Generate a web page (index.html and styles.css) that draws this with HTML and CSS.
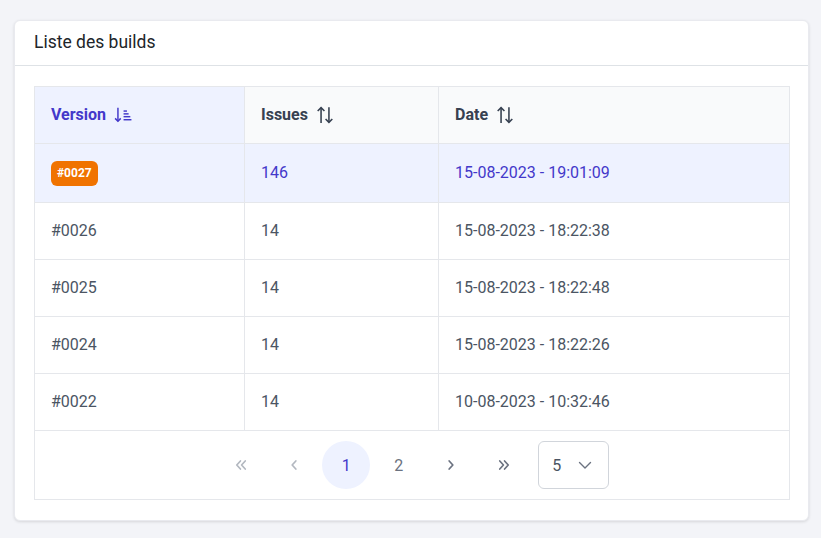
FILE: index.html
```html
<!DOCTYPE html>
<html lang="fr">
<head>
<meta charset="utf-8">
<title>Liste des builds</title>
<link rel="stylesheet" href="styles.css">
</head>
<body>
<div class="page">
  <section class="card">
    <header class="card-header">Liste des builds</header>
    <div class="card-body">
      <div class="datatable">
        <table>
          <colgroup>
            <col class="c1"><col class="c2"><col class="c3">
          </colgroup>
          <thead>
            <tr>
              <th class="sorted"><span class="th-inner">Version
                <svg class="sort-icon" width="18" height="18" viewBox="0 0 16 16" fill="none" stroke="currentColor" stroke-width="1.3">
                  <path d="M3.5 1.5v12"/><path d="M1 11l2.5 2.6L6 11"/>
                  <path d="M8.5 4.5h3"/><path d="M8.5 7h4.5"/><path d="M8.5 9.5h6"/><path d="M8.5 12.2h7"/>
                </svg></span></th>
              <th><span class="th-inner">Issues
                <svg class="sort-icon" width="18" height="18" viewBox="0 0 16 16" fill="none" stroke="currentColor" stroke-width="1.4">
                  <path d="M4.5 15V1.5"/><path d="M1.5 4.5l3-3 3 3"/>
                  <path d="M11.5 1v13.5"/><path d="M8.5 11.5l3 3 3-3"/>
                </svg></span></th>
              <th><span class="th-inner">Date
                <svg class="sort-icon" width="18" height="18" viewBox="0 0 16 16" fill="none" stroke="currentColor" stroke-width="1.4">
                  <path d="M4.5 15V1.5"/><path d="M1.5 4.5l3-3 3 3"/>
                  <path d="M11.5 1v13.5"/><path d="M8.5 11.5l3 3 3-3"/>
                </svg></span></th>
            </tr>
          </thead>
          <tbody>
            <tr class="highlight">
              <td><span class="badge">#0027</span></td>
              <td>146</td>
              <td>15-08-2023 - 19:01:09</td>
            </tr>
            <tr><td>#0026</td><td>14</td><td>15-08-2023 - 18:22:38</td></tr>
            <tr><td>#0025</td><td>14</td><td>15-08-2023 - 18:22:48</td></tr>
            <tr><td>#0024</td><td>14</td><td>15-08-2023 - 18:22:26</td></tr>
            <tr><td>#0022</td><td>14</td><td>10-08-2023 - 10:32:46</td></tr>
          </tbody>
        </table>
        <nav class="paginator">
          <button class="pg-btn disabled" aria-label="Première page">
            <svg width="16" height="16" viewBox="0 0 14 14" fill="none" stroke="currentColor" stroke-width="1.5" stroke-linecap="round" stroke-linejoin="round"><path d="M6.5 3.5L3.3 7l3.2 3.5"/><path d="M10.7 3.5L7.5 7l3.2 3.5"/></svg>
          </button>
          <button class="pg-btn disabled" aria-label="Page précédente">
            <svg width="16" height="16" viewBox="0 0 14 14" fill="none" stroke="currentColor" stroke-width="1.5" stroke-linecap="round" stroke-linejoin="round"><path d="M8.6 3.5L5.4 7l3.2 3.5"/></svg>
          </button>
          <button class="pg-btn page active">1</button>
          <button class="pg-btn page">2</button>
          <button class="pg-btn" aria-label="Page suivante">
            <svg width="16" height="16" viewBox="0 0 14 14" fill="none" stroke="currentColor" stroke-width="1.5" stroke-linecap="round" stroke-linejoin="round"><path d="M5.4 3.5L8.6 7l-3.2 3.5"/></svg>
          </button>
          <button class="pg-btn" aria-label="Dernière page">
            <svg width="16" height="16" viewBox="0 0 14 14" fill="none" stroke="currentColor" stroke-width="1.5" stroke-linecap="round" stroke-linejoin="round"><path d="M3.3 3.5L6.5 7l-3.2 3.5"/><path d="M7.5 3.5L10.7 7l-3.2 3.5"/></svg>
          </button>
          <div class="dropdown">
            <span class="dd-label">5</span>
            <svg class="dd-chevron" width="16" height="16" viewBox="0 0 16 16" fill="none" stroke="currentColor" stroke-width="1.4" stroke-linecap="round" stroke-linejoin="round"><path d="M2.5 5.5L8 11l5.5-5.5"/></svg>
          </div>
        </nav>
      </div>
    </div>
  </section>
</div>
</body>
</html>
```

FILE: styles.css
```css
* { box-sizing: border-box; }

html, body {
  margin: 0;
  background: #f3f4f8;
  font-family: Roboto, "Liberation Sans", Arial, sans-serif;
  font-size: 16px;
  color: #4b5563;
}

.page {
  padding: 20px 12px 18px 14px;
}

.card {
  background: #ffffff;
  border-radius: 6px;
  border: 1px solid #e9eaef;
  box-shadow: 0 1px 3px rgba(0, 0, 0, 0.12);
}

.card-header {
  height: 45px;
  padding: 0 19px 2px;
  display: flex;
  align-items: center;
  font-size: 17.5px;
  color: #212529;
  border-bottom: 1px solid #dee2e6;
}

.card-body {
  padding: 20px 19px 20px 19px;
}

.datatable {
  width: 755px;
}

table {
  width: 755px;
  border-collapse: collapse;
  table-layout: fixed;
}

col.c1 { width: 210px; }
col.c2 { width: 194px; }
col.c3 { width: 351px; }

th, td {
  border: 1px solid #e5e7eb;
  padding: 16px;
  text-align: left;
  line-height: 24px;
  font-size: 16px;
}

th {
  background: #f9fafb;
  color: #374151;
  font-weight: 700;
}

th.sorted {
  background: #eef2ff;
  color: #4338ca;
}

.th-inner {
  display: inline-flex;
  align-items: center;
}

.sort-icon {
  margin-left: 8px;
}

td {
  color: #4b5563;
  height: 57px;
}

tr.highlight td {
  background: #eef2ff;
  color: #4338ca;
  height: 59px;
}

.badge {
  display: inline-block;
  vertical-align: middle;
  background: #f07300;
  color: #ffffff;
  font-size: 12px;
  font-weight: 700;
  line-height: 25px;
  height: 25px;
  padding: 0 6px;
  border-radius: 6px;
}

.paginator {
  display: flex;
  justify-content: center;
  align-items: center;
  padding: 8px 16px;
  border: 1px solid #e5e7eb;
  border-top: 0;
  height: 69px;
  width: 756px;
}

.pg-btn {
  width: 48px;
  height: 48px;
  margin: 0 2.3px;
  border: 0;
  border-radius: 50%;
  background: transparent;
  display: flex;
  align-items: center;
  justify-content: center;
  font-family: inherit;
  font-size: 16px;
  color: #6b7280;
  padding: 0;
}

.pg-btn.disabled {
  color: #b3b8c0;
}

.pg-btn.active {
  background: #eef2ff;
  color: #4338ca;
}

.dropdown {
  margin-left: 8px;
  width: 71px;
  height: 48px;
  border: 1px solid #d1d5db;
  border-radius: 6px;
  display: flex;
  align-items: center;
  padding: 0 0 0 13px;
  color: #4b5563;
}

.dd-label {
  width: 25px;
}

.dd-chevron {
  color: #6b7280;
}
```
